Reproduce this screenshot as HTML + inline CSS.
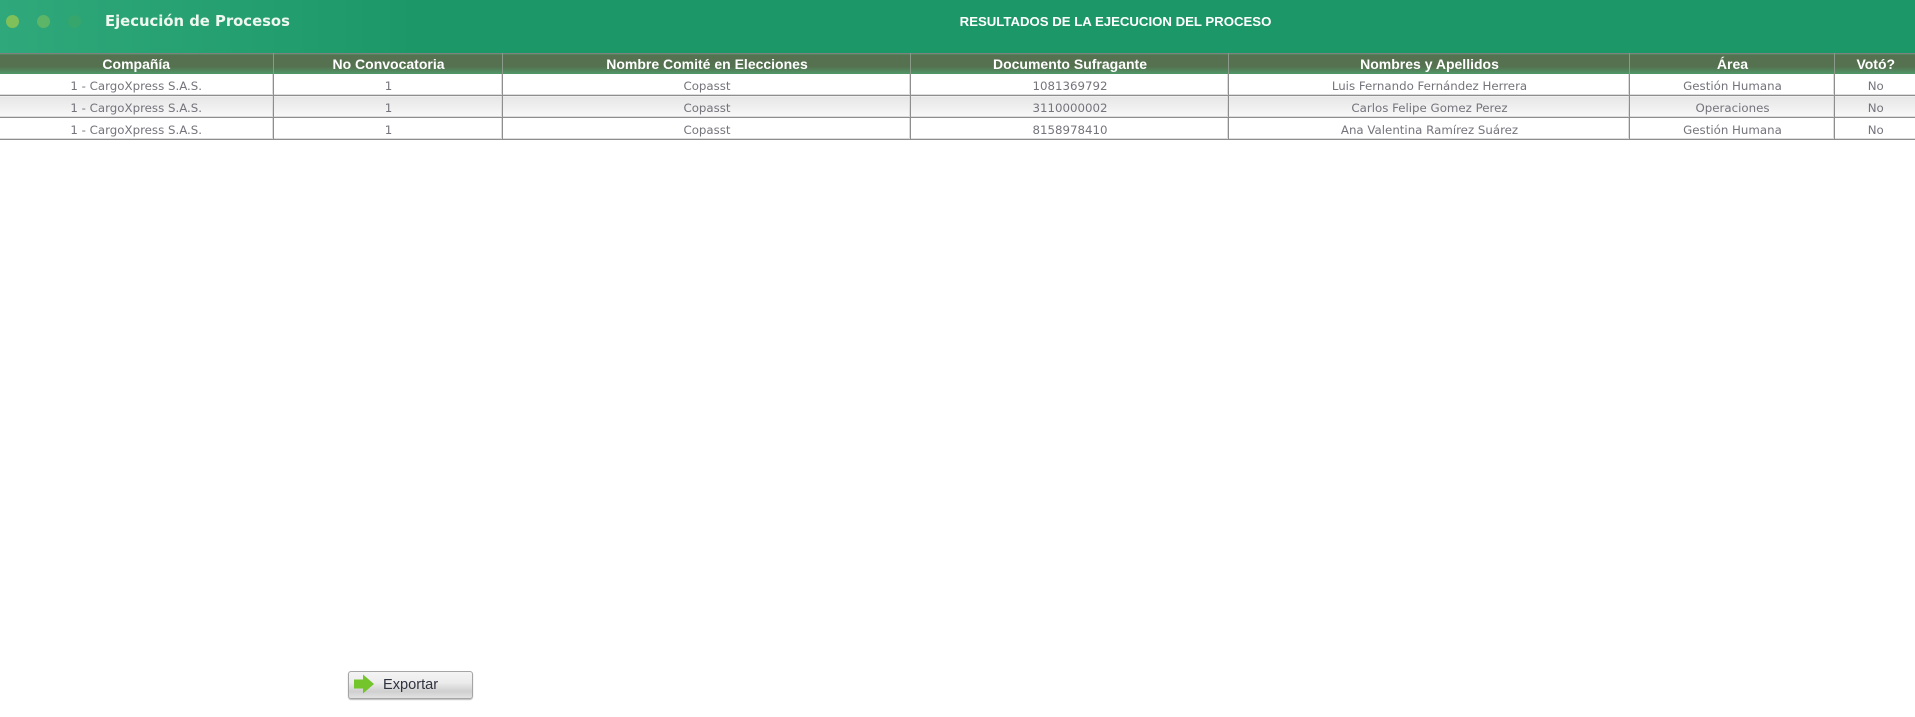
<!DOCTYPE html>
<html lang="es"><head><meta charset="utf-8"><title>Ejecución de Procesos</title>
<style>
html,body{margin:0;padding:0;width:1915px;height:717px;overflow:hidden;background:#fff}
body{position:relative;font-family:"DejaVu Sans","Liberation Sans",sans-serif}
.top{position:absolute;left:0;top:0;width:1915px;height:53px;background:#1c9868}
.glow{position:absolute;left:0;top:0;width:420px;height:53px;background:linear-gradient(90deg,#2fa87b 0,#2ba576 90px,#1c9868 100%)}
.dot{position:absolute;border-radius:50%;width:13px;height:13px;top:15px}
.title{position:absolute;left:105px;top:13px;font:bold 14.8px "DejaVu Sans",sans-serif;color:#eef7f0;white-space:nowrap}
.sub{position:absolute;left:0;width:2231px;top:14px;text-align:center;font:bold 13.2px "Liberation Sans",sans-serif;color:#fff;white-space:nowrap}
table{position:absolute;left:0;top:53px;width:1915px;border-collapse:collapse;table-layout:fixed}
th{height:20px;padding:0;background:linear-gradient(#55714f 0,#55714f 60%,#4f9a69 100%);color:#fff;font:bold 14px "Liberation Sans",sans-serif;border-right:1px solid #8a9a88;border-top:1px solid #808080;text-align:center}
td{height:18px;padding:3px 0 0;font-size:11.8px;color:#74747c;text-align:center;border-right:1px solid #8e8e8e;border-bottom:1px solid #8e8e8e;box-shadow:inset -1px -1px 0 #dcdcdc}
th:not(:first-child),td:not(:first-child){padding-left:2px}
th:last-child,td:last-child{border-right:0}
td:last-child{box-shadow:inset 0 -1px 0 #dcdcdc}
tr.g td{background:linear-gradient(#e6e6e6,#fafafa)}
.btn{position:absolute;left:348px;top:671px;width:123px;height:26px;border:1px solid #a5a5a5;border-radius:3px;background:linear-gradient(#f4f4f4 0,#ececec 40%,#cfcfcf 75%,#e2e2e2 100%);box-shadow:0 1px 1px #bbb}
.btn span{position:absolute;left:34px;top:5px;font:14.6px "Liberation Sans",sans-serif;color:#2f3340}
.btn svg{position:absolute;left:4px;top:2px}
</style></head>
<body>
<div class="top"><div class="glow"></div>
<div class="dot" style="left:6px;background:#7fc05a"></div>
<div class="dot" style="left:37px;background:#5db568"></div>
<div class="dot" style="left:68px;background:#36a66c"></div>
<div class="title">Ejecución de Procesos</div>
<div class="sub">RESULTADOS DE LA EJECUCION DEL PROCESO</div></div>
<table>
<colgroup><col style="width:273px"><col style="width:229px"><col style="width:408px"><col style="width:318px"><col style="width:401px"><col style="width:205px"><col style="width:81px"></colgroup>
<tr><th>Compañía</th><th>No Convocatoria</th><th>Nombre Comité en Elecciones</th><th>Documento Sufragante</th><th>Nombres y Apellidos</th><th>Área</th><th>Votó?</th></tr>
<tr><td>1 - CargoXpress S.A.S.</td><td>1</td><td>Copasst</td><td>1081369792</td><td>Luis Fernando Fernández Herrera</td><td>Gestión Humana</td><td>No</td></tr>
<tr class="g"><td>1 - CargoXpress S.A.S.</td><td>1</td><td>Copasst</td><td>3110000002</td><td>Carlos Felipe Gomez Perez</td><td>Operaciones</td><td>No</td></tr>
<tr><td>1 - CargoXpress S.A.S.</td><td>1</td><td>Copasst</td><td>8158978410</td><td>Ana Valentina Ramírez Suárez</td><td>Gestión Humana</td><td>No</td></tr>
</table>
<div class="btn"><svg width="22" height="20" viewBox="0 0 22 20"><path d="M1 5.5H10V0.5L21 10 10 19.5V14.5H1Z" fill="#74c42c"/></svg><span>Exportar</span></div>
</body></html>
